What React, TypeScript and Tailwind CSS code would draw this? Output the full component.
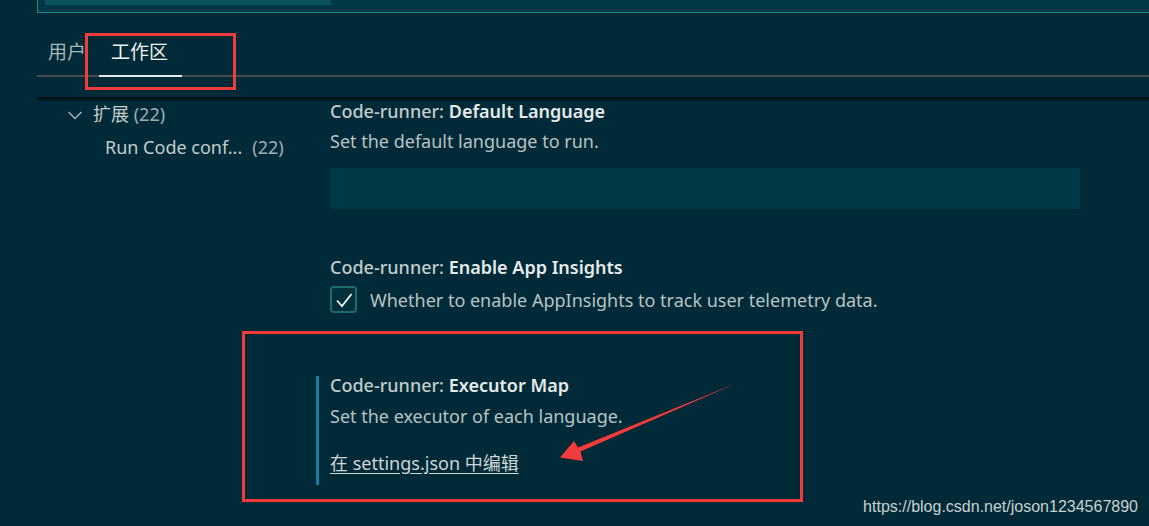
import { useState } from "react";

const font = { fontFamily: '"Noto Sans", "Noto Sans CJK SC", sans-serif' };

function Chevron() {
  return (
    <svg width="16" height="16" viewBox="0 0 16 16" className="text-[#a9b7bb]">
      <path d="M1.5 5 L8 11.5 L14.5 5" fill="none" stroke="currentColor" strokeWidth="1.4" />
    </svg>
  );
}

function SettingTitle({ label }: { label: string }) {
  return (
    <div className="text-[18px] leading-[24px] text-[#c4cccc]">
      <span className="font-medium">Code-runner: </span>
      <span className="font-semibold text-[#e6eaea]">{label}</span>
    </div>
  );
}

export default function App() {
  const [checked, setChecked] = useState(true);
  return (
    <div
      className="relative w-[1149px] h-[526px] overflow-hidden bg-[#002a37] text-[#c4cccc]"
      style={font}
    >
      {/* search box, cut at the top */}
      <div className="ml-[37px] h-[13px] bg-[#003847] border-l border-b border-[#1f8a84]">
        <div className="ml-[7px] w-[286px] h-[5px] bg-[#0a525c]" />
      </div>

      {/* tabs */}
      <div className="ml-[37px] h-[64px] flex items-end gap-[13px] border-b-2 border-[#464a4b] pl-[11px]">
        <div className="pb-[11px] text-[19px] leading-[24px] text-[#a9b7bb]">用户</div>
        <div className="-mb-[2px] pl-[12px] pr-[14px] pb-[11px] border-b-2 border-[#e8e8e8] text-[19px] leading-[24px] text-[#f0f0f0]">
          工作区
        </div>
      </div>

      <div className="h-[20px]" />
      <div className="ml-[37px] h-[5px] bg-gradient-to-b from-[#000b0f] to-[#002a37]" />

      {/* body */}
      <div className="flex">
        {/* tree */}
        <div className="w-[330px] shrink-0 -mt-[4px] text-[18px] leading-[33px]">
          <div className="flex items-center pl-[67px] gap-[10px]">
            <Chevron />
            <span>
              扩展 <span className="text-[#9fb0b4]">(22)</span>
            </span>
          </div>
          <div className="pl-[105px] flex gap-[10px]">
            <span>Run Code conf...</span>
            <span className="text-[#9fb0b4]">(22)</span>
          </div>
        </div>

        {/* settings */}
        <div className="flex-1 pr-[69px] -mt-[3px]">
          <SettingTitle label="Default Language" />
          <div className="mt-[6px] text-[18px] leading-[24px] text-[#b9c3c3]">
            Set the default language to run.
          </div>
          <div className="mt-[15px] h-[41px] bg-[#003847]" />

          <div className="mt-[46px]">
            <SettingTitle label="Enable App Insights" />
            <div className="mt-[7px] flex items-center gap-[13px]">
              <button
                onClick={() => setChecked(!checked)}
                className="w-[27px] h-[27px] rounded-[4px] border-2 border-[#1f6d6a] bg-[#00303d] flex items-center justify-center"
              >
                {checked && (
                  <svg width="20" height="20" viewBox="0 0 20 20">
                    <path d="M3 10.5 L8 16 L17.5 4" fill="none" stroke="#f2f2f2" strokeWidth="1.8" />
                  </svg>
                )}
              </button>
              <span className="text-[18px] leading-[24px] text-[#b9c3c3]">
                Whether to enable AppInsights to track user telemetry data.
              </span>
            </div>
          </div>

          <div className="mt-[63px] -ml-[14px] flex flex-col border-l-[3px] border-[#137fa3] pl-[11px] h-[109px]">
            <div className="-mt-[3px]">
              <SettingTitle label="Executor Map" />
            </div>
            <div className="mt-[7px] text-[18px] leading-[24px] text-[#b9c3c3]">
              Set the executor of each language.
            </div>
            <div className="mt-[23px] text-[18px] leading-[24px] text-[#d0d6d6] underline underline-offset-[3px]">
              在 settings.json 中编辑
            </div>
          </div>
        </div>
      </div>

      {/* annotations */}
      <div className="absolute left-[85px] top-[33px] w-[151px] h-[57px] border-[3px] border-[#f23b3b]" />
      <div className="absolute left-[242px] top-[331px] w-[561px] h-[171px] border-[3px] border-[#f23b3b]" />
      <svg className="absolute left-0 top-0" width="1149" height="526" viewBox="0 0 1149 526">
        <path
          d="M737 383 L578 447.5 L574 441 L560 457.5 L583 461 L580.5 451.5 Z"
          fill="#f23b3b"
        />
      </svg>

      <div
        className="absolute right-[11px] bottom-[10px] text-[16px] leading-[18px] text-[#c9d0d0]"
        style={{ fontFamily: '"Liberation Sans", Arial, sans-serif' }}
      >
        https://blog.csdn.net/joson1234567890
      </div>
    </div>
  );
}
